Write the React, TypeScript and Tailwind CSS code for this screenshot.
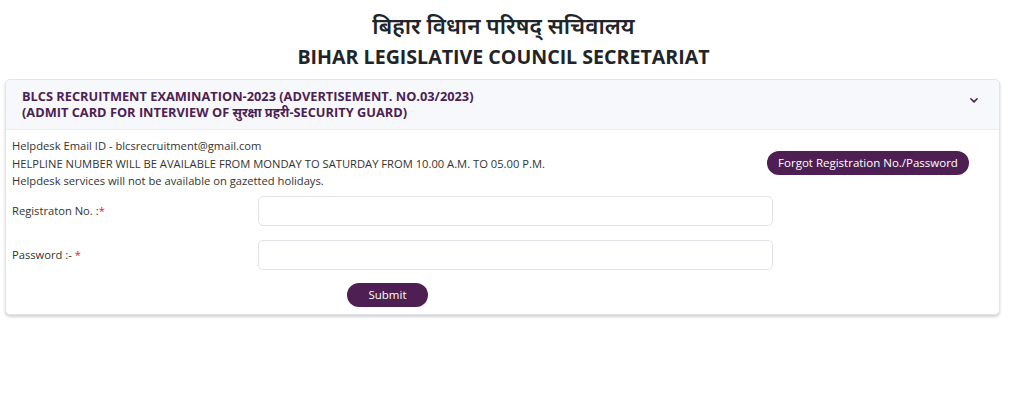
import React from "react";

function ChevronDown() {
  return (
    <svg width="10" height="10" viewBox="0 0 16 16" fill="none" stroke="#4b2152" strokeWidth="2.5" strokeLinecap="round" strokeLinejoin="round">
      <path d="M3 6l5 5 5-5" />
    </svg>
  );
}

export default function App() {
  return (
    <div className="w-[1024px] h-[414px] bg-white overflow-hidden" style={{ fontFamily: '"Open Sans", "Noto Sans", sans-serif' }}>
      <div className="w-[1007px] flex flex-col items-center pt-[9px]">
        <h1 className="text-[22.5px] leading-[34px] font-semibold text-[#212529]">बिहार विधान परिषद् सचिवालय</h1>
        <h2 className="text-[19.6px] leading-[28px] font-bold text-[#212529]">BIHAR LEGISLATIVE COUNCIL SECRETARIAT</h2>
      </div>
      <div className="mx-[5px] mt-[8px] w-[995px] rounded-[5px] border border-[#e3e4e8] shadow-[0_2px_3px_rgba(0,0,0,0.18)] bg-white">
        <div className="flex items-center justify-between bg-[#f7f8fb] border-b border-[#eceef2] rounded-t-[5px] pl-[16px] pr-[20px] h-[50px]">
          <div className="text-[12.8px] leading-[15.5px] font-bold text-[#4b2152]">
            <div>BLCS RECRUITMENT EXAMINATION-2023 (ADVERTISEMENT. NO.03/2023)</div>
            <div>(ADMIT CARD FOR INTERVIEW OF सुरक्षा प्रहरी-SECURITY GUARD)</div>
          </div>
          <div className="mb-[9px]">
            <ChevronDown />
          </div>
        </div>
        <div className="px-[6px] pt-[7px] pb-[7px] text-[#333] text-[11.2px]">
          <div className="flex items-start">
            <div className="leading-[17.5px] flex-1">
              <div>Helpdesk Email ID - blcsrecruitment@gmail.com</div>
              <div>HELPLINE NUMBER WILL BE AVAILABLE FROM MONDAY TO SATURDAY FROM 10.00 A.M. TO 05.00 P.M.</div>
              <div>Helpdesk services will not be available on gazetted holidays.</div>
            </div>
            <button className="mt-[14px] mr-[24px] h-[24px] w-[202px] rounded-full bg-[#4e1f52] text-white text-[11.5px]">
              Forgot Registration No./Password
            </button>
          </div>
          <div className="mt-[6px] flex items-center">
            <div className="w-[246px] leading-[17px]">
              Registraton No. :<span className="text-[#e02424]">*</span>
            </div>
            <input className="h-[30px] w-[515px] rounded-[5px] border border-[#e2e3ea] outline-none" />
          </div>
          <div className="mt-[14px] flex items-center">
            <div className="w-[246px] leading-[17px]">
              Password :- <span className="text-[#e02424]">*</span>
            </div>
            <input type="password" className="h-[30px] w-[515px] rounded-[5px] border border-[#e2e3ea] outline-none" />
          </div>
          <div className="mt-[13px] pl-[335px]">
            <button className="h-[24px] w-[81px] rounded-full bg-[#4e1f52] text-white text-[11.5px]">Submit</button>
          </div>
        </div>
      </div>
    </div>
  );
}
